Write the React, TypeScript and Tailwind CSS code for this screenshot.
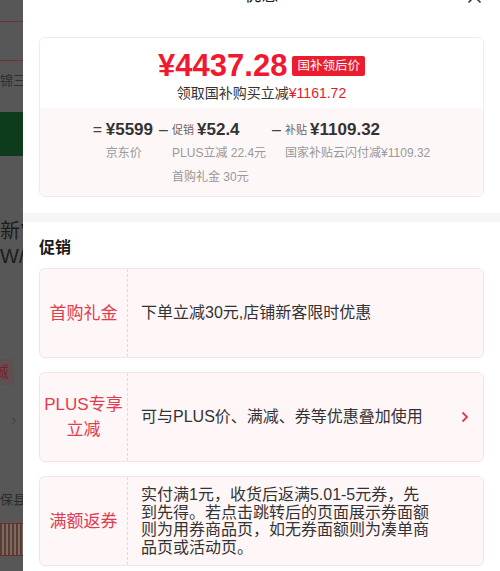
import React from 'react'

const promos = [
  { label: ['首购礼金'], text: '下单立减30元,店铺新客限时优惠' },
  { label: ['PLUS专享', '立减'], text: '可与PLUS价、满减、券等优惠叠加使用', arrow: true },
  {
    label: ['满额返券'],
    text: '实付满1元，收货后返满5.01-5元券，先到先得。若点击跳转后的页面展示券面额则为用券商品页，如无券面额则为凑单商品页或活动页。'
  }
]

const Op = ({ children }: { children: React.ReactNode }) => (
  <span className="w-[13px] h-[22px] flex items-center text-[16px] text-[#444]">{children}</span>
)

const Backdrop = () => (
  <div className="w-[23px] shrink-0 bg-[#575757] overflow-hidden flex flex-col whitespace-nowrap">
    <div className="h-[21px]" />
    <div className="h-[1px] bg-[#6e3434]" />
    <div className="h-[38px]" />
    <div className="h-[1px] bg-[#6e3434]" />
    <div className="h-[40px] flex items-center text-[13px] text-[#2e2e2e]">锦三</div>
    <div className="h-[11px]" />
    <div className="h-[44px] bg-[#0f3b1d]" />
    <div className="h-[62px]" />
    <div className="h-[26px] text-[20px] leading-[26px] text-[#1c1c1c]">新’</div>
    <div className="h-[24px] text-[20px] leading-[24px] text-[#1c1c1c]">W/</div>
    <div className="h-[91px]" />
    <div className="h-[26px] w-[14px] bg-[#5e5051] flex items-center text-[15px] text-[#7d1f2a]">
      <span className="-ml-[6px]">诚</span>
    </div>
    <div className="h-[25px]" />
    <div className="h-[20px] flex items-center pl-[11px] text-[16px] text-[#444]">›</div>
    <div className="h-[60px]" />
    <div className="h-[20px] flex items-center text-[13px] text-[#2a2a2a]">保县</div>
    <div className="h-[13px]" />
    <div className="h-[33px] border-y border-[#6b2e2a] bg-[repeating-linear-gradient(90deg,#5b3b35_0px,#5b3b35_2px,#7a6a60_2px,#7a6a60_4px)]" />
  </div>
)

export default function App() {
  return (
    <div className="w-[500px] h-[571px] overflow-hidden flex font-['Liberation_Sans','Noto_Sans_CJK_SC',sans-serif]">
      <Backdrop />
      <div className="flex-1 bg-white flex flex-col">
        <div className="-mt-[16px] mb-[29px] h-[24px] flex items-center justify-between px-[18px]">
          <span className="w-[15px]" />
          <span className="text-[17px] leading-[24px] text-[#1a1a1a]">优惠</span>
          <svg width="15" height="15" viewBox="0 0 15 15" fill="none" stroke="#333" strokeWidth="1.5">
            <path d="M1.5 1.5 L13.5 13.5 M13.5 1.5 L1.5 13.5" />
          </svg>
        </div>

        <div className="mx-[16px] rounded-[6px] border border-[#ececec] overflow-hidden">
          <div className="bg-white pt-[11px] pb-[5px] flex flex-col items-center">
            <div className="flex items-center gap-[5px]">
              <span className="text-[31px] leading-[34px] font-bold text-[#f0192f]">¥4437.28</span>
              <span className="h-[20px] px-[5px] rounded-[2px] bg-[#ec1c2e] text-white text-[12.5px] leading-[20px]">
                国补领后价
              </span>
            </div>
            <div className="text-[14px] leading-[20px] text-[#333]">
              领取国补购买立减<span className="text-[#e8192c]">¥1161.72</span>
            </div>
          </div>
          <div className="bg-[#fdf7f7] pt-[11px] pb-[7px] flex justify-center gap-[6px]">
            <div className="flex">
              <Op>=</Op>
              <div className="flex flex-col">
                <div className="h-[22px] flex items-center text-[17px] font-semibold text-[#333]">¥5599</div>
                <div className="h-[24px] flex items-center text-[12px] text-[#999]">京东价</div>
              </div>
            </div>
            <div className="flex">
              <Op>–</Op>
              <div className="flex flex-col">
                <div className="h-[22px] flex items-center text-[#333]">
                  <span className="text-[11px] text-[#666] mr-[3px]">促销</span>
                  <span className="text-[17px] font-semibold">¥52.4</span>
                </div>
                <div className="h-[24px] flex items-center text-[12px] text-[#999]">PLUS立减 22.4元</div>
                <div className="h-[24px] flex items-center text-[12px] text-[#999]">首购礼金 30元</div>
              </div>
            </div>
            <div className="flex">
              <Op>–</Op>
              <div className="flex flex-col">
                <div className="h-[22px] flex items-center text-[#333]">
                  <span className="text-[11px] text-[#666] mr-[3px]">补贴</span>
                  <span className="text-[17px] font-semibold">¥1109.32</span>
                </div>
                <div className="h-[24px] flex items-center text-[12px] text-[#999]">国家补贴云闪付减¥1109.32</div>
              </div>
            </div>
          </div>
        </div>

        <div className="mt-[16px] h-[9px] bg-[#f5f6f8]" />

        <div className="px-[16px] pt-[14px]">
          <div className="text-[16px] leading-[24px] font-bold text-[#1a1a1a] mb-[8px]">促销</div>
          <div className="flex flex-col gap-[14px]">
            {promos.map(p => (
              <div
                key={p.label[0]}
                className="flex h-[90px] rounded-[6px] border border-[#f6e3e5] bg-[#fff6f7]"
              >
                <div className="w-[88px] shrink-0 flex flex-col items-center justify-center border-r border-dashed border-[#efd3d6] text-[17px] leading-[25px] text-[#e23b4e]">
                  {p.label.map(l => (
                    <span key={l}>{l}</span>
                  ))}
                </div>
                <div className="w-[303px] shrink-0 flex items-center pl-[13px] text-[16px] leading-[17.5px] text-[#333]">
                  {p.text}
                </div>
                <div className="flex-1 flex items-center justify-end pr-[14px]">
                  {p.arrow && (
                    <svg width="8" height="12" viewBox="0 0 8 12" fill="none" stroke="#e23b4e" strokeWidth="1.8">
                      <path d="M1.5 1.5 L6 6 L1.5 10.5" />
                    </svg>
                  )}
                </div>
              </div>
            ))}
          </div>
        </div>
      </div>
    </div>
  )
}
